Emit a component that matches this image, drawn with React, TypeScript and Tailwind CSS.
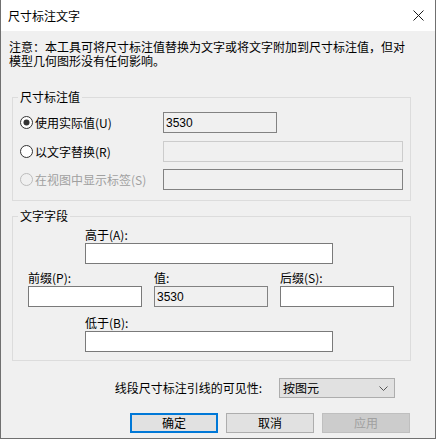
import React from "react";

function Radio({ checked = false, disabled = false }: { checked?: boolean; disabled?: boolean }) {
  const ring = disabled ? "#bcbcbc" : "#333333";
  const fill = disabled ? "#f0f0f0" : "#ffffff";
  return (
    <svg width="13" height="13" viewBox="0 0 13 13" className="shrink-0">
      <circle cx="6.5" cy="6.5" r="6" fill={fill} stroke={ring} strokeWidth="1" />
      {checked && <circle cx="6.5" cy="6.5" r="3" fill="#333333" />}
    </svg>
  );
}

function Group({ title, children, className = "" }: { title: string; children: React.ReactNode; className?: string }) {
  return (
    <div className={`ml-[11px] w-[399px] border border-[#dcdcdc] flex flex-col ${className}`}>
      <div className="-mt-[8px] h-[14px] flex">
        <span className="ml-[5px] px-[2px] bg-[#f0f0f0] leading-[14px]">{title}</span>
      </div>
      {children}
    </div>
  );
}

export default function App() {
  return (
    <div className="w-[436px] h-[439px] flex flex-col border-x border-b border-[#707070] bg-[#f0f0f0] font-['Noto_Sans_CJK_SC',sans-serif] text-[12px] text-black overflow-hidden">
      <div className="h-[31px] shrink-0 bg-white flex items-center justify-between pl-[7px] pr-[11px]">
        <span className="leading-[14px]">尺寸标注文字</span>
        <svg width="11" height="11" viewBox="0 0 11 11">
          <path d="M0.5 0.5L10.5 10.5M10.5 0.5L0.5 10.5" stroke="#1a1a1a" strokeWidth="1" />
        </svg>
      </div>

      <div className="flex flex-col">
        <p className="mt-[9px] ml-[8px] leading-[14px]">
          注意：本工具可将尺寸标注值替换为文字或将文字附加到尺寸标注值，但对
          <br />
          模型几何图形没有任何影响。
        </p>

        <Group title="尺寸标注值" className="mt-[29px] pb-[10px]">
          <div className="mt-[8px] h-[21px] flex items-center">
            <div className="w-[150px] pl-[7px] flex items-center gap-[2px]">
              <Radio checked />
              <span className="leading-[14px]">使用实际值(U)</span>
            </div>
            <div className="w-[114px] h-[21px] border border-[#828282] bg-[#f0f0f0] flex items-center pl-[2px] font-['Liberation_Sans',sans-serif] text-[12px]">
              3530
            </div>
          </div>
          <div className="mt-[8px] h-[21px] flex items-center">
            <div className="w-[150px] pl-[7px] flex items-center gap-[2px]">
              <Radio />
              <span className="leading-[14px]">以文字替换(R)</span>
            </div>
            <div className="w-[240px] h-[21px] border border-[#cccccc] bg-[#f0f0f0]" />
          </div>
          <div className="mt-[7px] h-[21px] flex items-center">
            <div className="w-[150px] pl-[7px] flex items-center gap-[2px]">
              <Radio disabled />
              <span className="leading-[14px] text-[#a0a0a0]">在视图中显示标签(S)</span>
            </div>
            <div className="w-[240px] h-[21px] border border-[#828282] bg-[#f0f0f0]" />
          </div>
        </Group>

        <Group title="文字字段" className="mt-[15px] pb-[8px]">
          <div className="mt-[5px] ml-[72px] flex flex-col">
            <span className="h-[14px] leading-[14px]">高于(A):</span>
            <div className="mt-[1px] w-[248px] h-[21px] border border-[#7a7a7a] bg-white" />
          </div>
          <div className="mt-[7px] ml-[15px] flex gap-[12px]">
            <div className="flex flex-col">
              <span className="h-[14px] leading-[14px]">前缀(P):</span>
              <div className="mt-[1px] w-[114px] h-[21px] border border-[#7a7a7a] bg-white" />
            </div>
            <div className="flex flex-col">
              <span className="h-[14px] leading-[14px]">值:</span>
              <div className="mt-[1px] w-[114px] h-[21px] border border-[#828282] bg-[#f0f0f0] flex items-center pl-[2px] font-['Liberation_Sans',sans-serif]">
                3530
              </div>
            </div>
            <div className="flex flex-col">
              <span className="h-[14px] leading-[14px]">后缀(S):</span>
              <div className="mt-[1px] w-[114px] h-[21px] border border-[#7a7a7a] bg-white" />
            </div>
          </div>
          <div className="mt-[9px] ml-[72px] flex flex-col">
            <span className="h-[14px] leading-[14px]">低于(B):</span>
            <div className="mt-[1px] w-[248px] h-[21px] border border-[#7a7a7a] bg-white" />
          </div>
        </Group>

        <div className="mt-[17px] h-[20px] flex items-center justify-end pr-[40px]">
          <span className="leading-[14px] mr-[17px]">线段尺寸标注引线的可见性:</span>
          <div className="w-[116px] h-[20px] border border-[#adadad] bg-[#e1e1e1] flex items-center justify-between pl-[3px] pr-[6px]">
            <span className="leading-[14px]">按图元</span>
            <svg width="9" height="5" viewBox="0 0 9 5">
              <path d="M0.5 0.5L4.5 4.5L8.5 0.5" fill="none" stroke="#555555" strokeWidth="1" />
            </svg>
          </div>
        </div>

        <div className="mt-[15px] flex justify-end pr-[25px] gap-[8px]">
          <div className="w-[88px] h-[20px] border-2 border-[#0078d7] bg-[#e1e1e1] flex items-center justify-center leading-[14px]">
            确定
          </div>
          <div className="w-[88px] h-[20px] border border-[#adadad] bg-[#e1e1e1] flex items-center justify-center leading-[14px]">
            取消
          </div>
          <div className="w-[88px] h-[20px] border border-[#bfbfbf] bg-[#cccccc] flex items-center justify-center leading-[14px] text-[#a0a0a0]">
            应用
          </div>
        </div>
      </div>
    </div>
  );
}
